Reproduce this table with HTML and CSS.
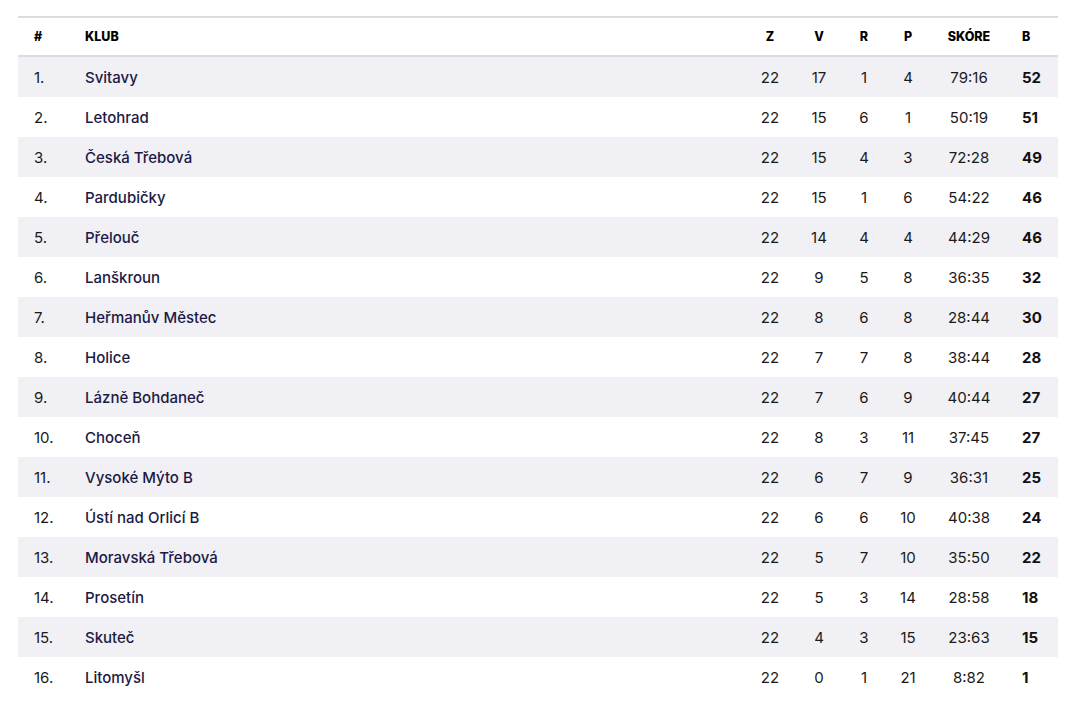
FILE: index.html
```html
<!DOCTYPE html>
<html lang="cs">
<head>
<meta charset="utf-8">
<link rel="stylesheet" href="styles.css">
</head>
<body>
<div class="wrap">
<table class="standings">
<colgroup>
<col class="c-pos"><col class="c-club"><col class="c-z"><col class="c-v"><col class="c-r"><col class="c-p"><col class="c-score"><col class="c-b">
</colgroup>
<thead>
<tr><th class="pos">#</th><th class="club">KLUB</th><th>Z</th><th>V</th><th>R</th><th>P</th><th>SKÓRE</th><th class="pts">B</th></tr>
</thead>
<tbody>
<tr><td class="pos">1.</td><td class="club">Svitavy</td><td>22</td><td>17</td><td>1</td><td>4</td><td>79:16</td><td class="pts">52</td></tr>
<tr><td class="pos">2.</td><td class="club">Letohrad</td><td>22</td><td>15</td><td>6</td><td>1</td><td>50:19</td><td class="pts">51</td></tr>
<tr><td class="pos">3.</td><td class="club">Česká Třebová</td><td>22</td><td>15</td><td>4</td><td>3</td><td>72:28</td><td class="pts">49</td></tr>
<tr><td class="pos">4.</td><td class="club">Pardubičky</td><td>22</td><td>15</td><td>1</td><td>6</td><td>54:22</td><td class="pts">46</td></tr>
<tr><td class="pos">5.</td><td class="club">Přelouč</td><td>22</td><td>14</td><td>4</td><td>4</td><td>44:29</td><td class="pts">46</td></tr>
<tr><td class="pos">6.</td><td class="club">Lanškroun</td><td>22</td><td>9</td><td>5</td><td>8</td><td>36:35</td><td class="pts">32</td></tr>
<tr><td class="pos">7.</td><td class="club">Heřmanův Městec</td><td>22</td><td>8</td><td>6</td><td>8</td><td>28:44</td><td class="pts">30</td></tr>
<tr><td class="pos">8.</td><td class="club">Holice</td><td>22</td><td>7</td><td>7</td><td>8</td><td>38:44</td><td class="pts">28</td></tr>
<tr><td class="pos">9.</td><td class="club">Lázně Bohdaneč</td><td>22</td><td>7</td><td>6</td><td>9</td><td>40:44</td><td class="pts">27</td></tr>
<tr><td class="pos">10.</td><td class="club">Choceň</td><td>22</td><td>8</td><td>3</td><td>11</td><td>37:45</td><td class="pts">27</td></tr>
<tr><td class="pos">11.</td><td class="club">Vysoké Mýto B</td><td>22</td><td>6</td><td>7</td><td>9</td><td>36:31</td><td class="pts">25</td></tr>
<tr><td class="pos">12.</td><td class="club">Ústí nad Orlicí B</td><td>22</td><td>6</td><td>6</td><td>10</td><td>40:38</td><td class="pts">24</td></tr>
<tr><td class="pos">13.</td><td class="club">Moravská Třebová</td><td>22</td><td>5</td><td>7</td><td>10</td><td>35:50</td><td class="pts">22</td></tr>
<tr><td class="pos">14.</td><td class="club">Prosetín</td><td>22</td><td>5</td><td>3</td><td>14</td><td>28:58</td><td class="pts">18</td></tr>
<tr><td class="pos">15.</td><td class="club">Skuteč</td><td>22</td><td>4</td><td>3</td><td>15</td><td>23:63</td><td class="pts">15</td></tr>
<tr><td class="pos">16.</td><td class="club">Litomyšl</td><td>22</td><td>0</td><td>1</td><td>21</td><td>8:82</td><td class="pts">1</td></tr>
</tbody>
</table>
</div>
</body>
</html>
```
FILE: styles.css
```css
html, body {
  margin: 0;
  padding: 0;
  background: #ffffff;
}
body {
  font-family: Inter, "Noto Sans", "Liberation Sans", sans-serif;
  color: #14142b;
}
.wrap {
  padding: 16px 24px 0 18px;
}
.standings {
  width: 1040px;
  border-collapse: collapse;
  table-layout: fixed;
  border-top: 2px solid #dcdce0;
}
.c-pos { width: 67px; }
.c-club { width: auto; }
.c-z { width: 50px; }
.c-v { width: 48px; }
.c-r { width: 42px; }
.c-p { width: 46px; }
.c-score { width: 76px; }
.c-b { width: 51px; }

.standings th {
  height: 37px;
  padding: 0;
  font-size: 12.5px;
  font-weight: 800;
  color: #000;
  text-align: center;
  border-bottom: 2px solid #dcdce0;
}
.standings td {
  height: 40px;
  padding: 0;
  font-size: 15px;
  font-weight: 400;
  color: #1a1a1a;
  text-align: center;
}
.standings tbody tr:nth-child(odd) {
  background: #f0f0f5;
}
.standings .pos {
  text-align: left;
  padding-left: 16px;
}
.standings .club {
  text-align: left;
}
.standings td.club {
  font-weight: 500;
  color: #1c1a44;
}
.standings .pts {
  text-align: left;
  padding-left: 15px;
}
.standings td.pts {
  font-weight: 700;
  color: #111;
}
```
